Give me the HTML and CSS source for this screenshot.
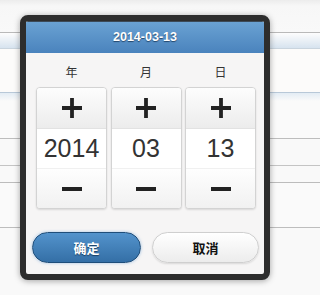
FILE: index.html
```html
<!DOCTYPE html>
<html lang="zh">
<head>
<meta charset="utf-8">
<title>日期选择</title>
<link rel="stylesheet" href="styles.css">
</head>
<body>
<div class="page">
  <div class="bg-row r1"></div>
  <div class="bg-row r2"></div>
  <div class="bg-row r3"></div>
  <div class="bg-row r4"></div>
  <div class="bg-row r5"></div>
  <div class="bg-row r6"></div>
  <div class="bg-row r7"></div>
  <div class="bg-row r8"></div>
</div>
<div class="dialog">
  <div class="header">2014-03-13</div>
  <div class="body">
    <div class="labels">
      <span>年</span><span>月</span><span>日</span>
    </div>
    <div class="columns">
      <div class="col">
        <div class="seg plus"><svg viewBox="0 0 20 20" width="20" height="20"><path d="M10 0V20M0 10H20" stroke="#222" stroke-width="3.8"/></svg></div>
        <div class="seg value">2014</div>
        <div class="seg minus"><svg viewBox="0 0 20 20" width="20" height="20"><path d="M0 10H20" stroke="#222" stroke-width="3.8"/></svg></div>
      </div>
      <div class="col">
        <div class="seg plus"><svg viewBox="0 0 20 20" width="20" height="20"><path d="M10 0V20M0 10H20" stroke="#222" stroke-width="3.8"/></svg></div>
        <div class="seg value">03</div>
        <div class="seg minus"><svg viewBox="0 0 20 20" width="20" height="20"><path d="M0 10H20" stroke="#222" stroke-width="3.8"/></svg></div>
      </div>
      <div class="col">
        <div class="seg plus"><svg viewBox="0 0 20 20" width="20" height="20"><path d="M10 0V20M0 10H20" stroke="#222" stroke-width="3.8"/></svg></div>
        <div class="seg value">13</div>
        <div class="seg minus"><svg viewBox="0 0 20 20" width="20" height="20"><path d="M0 10H20" stroke="#222" stroke-width="3.8"/></svg></div>
      </div>
    </div>
    <div class="actions">
      <button class="btn ok">确定</button>
      <button class="btn cancel">取消</button>
    </div>
  </div>
</div>
</body>
</html>
```
FILE: styles.css
```css
html, body {
  margin: 0;
  padding: 0;
}
body {
  min-height: 100vh;
  overflow: hidden;
  background: #f9f9f9;
  font-family: "Liberation Sans", "Noto Sans CJK SC", sans-serif;
  position: relative;
}
.page {
  display: flex;
  flex-direction: column;
}
.bg-row {
  box-sizing: border-box;
}
.r1 {
  height: 33px;
  background: linear-gradient(#ececec 0, #f7f7f7 6px, #f9f9f9 100%);
  border-bottom: 1px solid #b9b9b9;
}
.r2 {
  height: 16px;
  background: linear-gradient(#fdfdfd, #d7e3ef);
  border-bottom: 1px solid #c9d4de;
}
.r3 {
  height: 44px;
  background: #fcfbfa;
  border-bottom: 1px solid #b8c8d8;
}
.r4 {
  height: 46px;
  background: linear-gradient(#e3ecf4 0, #fafafa 8px, #fafafa 100%);
  border-bottom: 1px solid #bdbdbd;
}
.r5 {
  height: 27px;
  background: #f9f9f9;
  border-bottom: 1px solid #c4c4c4;
}
.r6 {
  height: 17px;
  background: #f9f9f9;
  border-bottom: 1px solid #bcbcbc;
}
.r7 {
  height: 45px;
  background: #fafafa;
  border-bottom: 1px solid #bdbdbd;
}
.r8 {
  height: 67px;
  background: #f9f9f9;
}

.dialog {
  position: absolute;
  left: 20px;
  top: 15px;
  width: 250px;
  height: 265px;
  box-sizing: border-box;
  border: 6px solid #2d2d2d;
  border-radius: 8px;
  background: #f6f5f5;
  box-shadow: 0 1px 6px rgba(0, 0, 0, 0.35);
  display: flex;
  flex-direction: column;
  overflow: hidden;
}
.header {
  height: 32px;
  flex: none;
  box-sizing: border-box;
  border-top: 1px solid #3c4a58;
  background: linear-gradient(#6aa2d3, #4a83bd);
  color: #fff;
  font-weight: bold;
  font-size: 12.5px;
  text-align: center;
  line-height: 31px;
  text-shadow: 0 1px 1px #23466b;
}
.body {
  flex: 1;
  display: flex;
  flex-direction: column;
}
.labels {
  display: grid;
  grid-template-columns: repeat(3, 71px);
  column-gap: 3.5px;
  padding: 12px 0 0 10px;
  height: 22px;
  font-family: "Noto Sans CJK SC", sans-serif;
  font-size: 12px;
  color: #333;
  text-align: center;
  line-height: 14px;
}
.columns {
  display: grid;
  grid-template-columns: repeat(3, 71px);
  column-gap: 3.5px;
  padding-left: 10px;
}
.col {
  box-sizing: border-box;
  height: 122px;
  border: 1px solid #d3d3d3;
  border-radius: 4px;
  background: #fff;
  display: flex;
  flex-direction: column;
  box-shadow: 0 1px 2px rgba(0, 0, 0, 0.12);
  overflow: hidden;
}
.seg {
  display: flex;
  align-items: center;
  justify-content: center;
}
.plus {
  height: 40px;
  background: linear-gradient(#fdfdfd, #ececec);
  border-bottom: 1px solid #e2e2e2;
}
.value {
  height: 39px;
  background: #fff;
  border-bottom: 1px solid #f0f0f0;
  font-size: 25px;
  color: #333;
}
.minus {
  flex: 1;
  background: linear-gradient(#fefefe, #f1f1f1);
}
.actions {
  display: grid;
  grid-template-columns: 109px 107px;
  column-gap: 11px;
  padding: 23px 0 0 6px;
}
.btn {
  height: 31px;
  border-radius: 16px;
  font-family: "Noto Sans CJK SC", sans-serif;
  font-weight: bold;
  font-size: 13px;
  padding: 0;
  margin: 0;
  cursor: pointer;
}
.ok {
  border: 1px solid #1f4e7a;
  background: linear-gradient(#5393cc, #346fa6);
  color: #fff;
  text-shadow: 0 1px 1px #1b3f63;
  box-shadow: 0 0 3px rgba(70, 140, 210, 0.5);
}
.cancel {
  border: 1px solid #cfcfcf;
  background: linear-gradient(#ffffff, #ececec);
  color: #111;
  box-shadow: 0 1px 2px rgba(0, 0, 0, 0.12);
}
```
